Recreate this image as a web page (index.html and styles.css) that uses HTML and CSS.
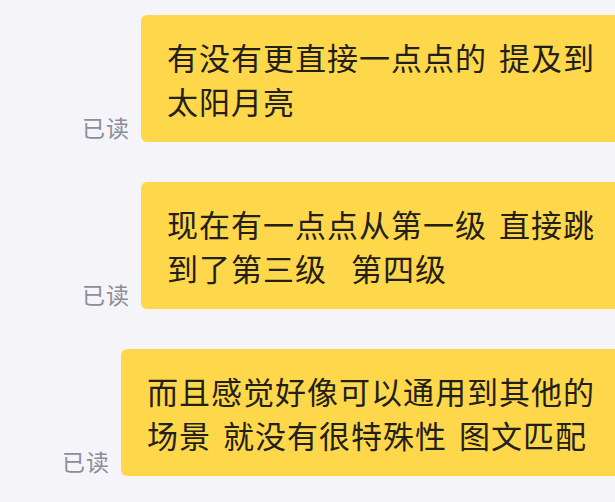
FILE: index.html
```html
<!DOCTYPE html>
<html lang="zh-CN">
<head>
<meta charset="utf-8">
<link rel="stylesheet" href="styles.css">
</head>
<body>
<div class="chat">
  <div class="row">
    <span class="read">已读</span>
    <div class="bubble">有没有更直接一点点的 提及到<br>太阳月亮</div>
  </div>
  <div class="row">
    <span class="read">已读</span>
    <div class="bubble">现在有一点点从第一级 直接跳<br>到了第三级  第四级</div>
  </div>
  <div class="row">
    <span class="read">已读</span>
    <div class="bubble">而且感觉好像可以通用到其他的<br>场景 就没有很特殊性 图文匹配</div>
  </div>
</div>
</body>
</html>
```
FILE: styles.css
```css
html, body {
  margin: 0;
  padding: 0;
  overflow: hidden;
  background: #f4f4f9;
}
body {
  width: 615px;
  height: 502px;
}
.chat {
  width: 621px;
  padding-top: 15px;
  display: flex;
  flex-direction: column;
  gap: 40px;
  font-family: "Noto Sans CJK SC", "Noto Sans", sans-serif;
}
.row {
  display: flex;
  justify-content: flex-end;
  align-items: flex-end;
  gap: 11px;
}
.read {
  font-size: 23px;
  line-height: 1;
  letter-spacing: 1px;
  color: #8d8d99;
  padding-bottom: 3px;
}
.bubble {
  background: #fed84a;
  border-radius: 6px;
  padding: 20px 26px 19px 26px;
  font-size: 31px;
  line-height: 44px;
  letter-spacing: 1px;
  word-spacing: 4px;
  color: #222018;
  white-space: pre;
}
```
